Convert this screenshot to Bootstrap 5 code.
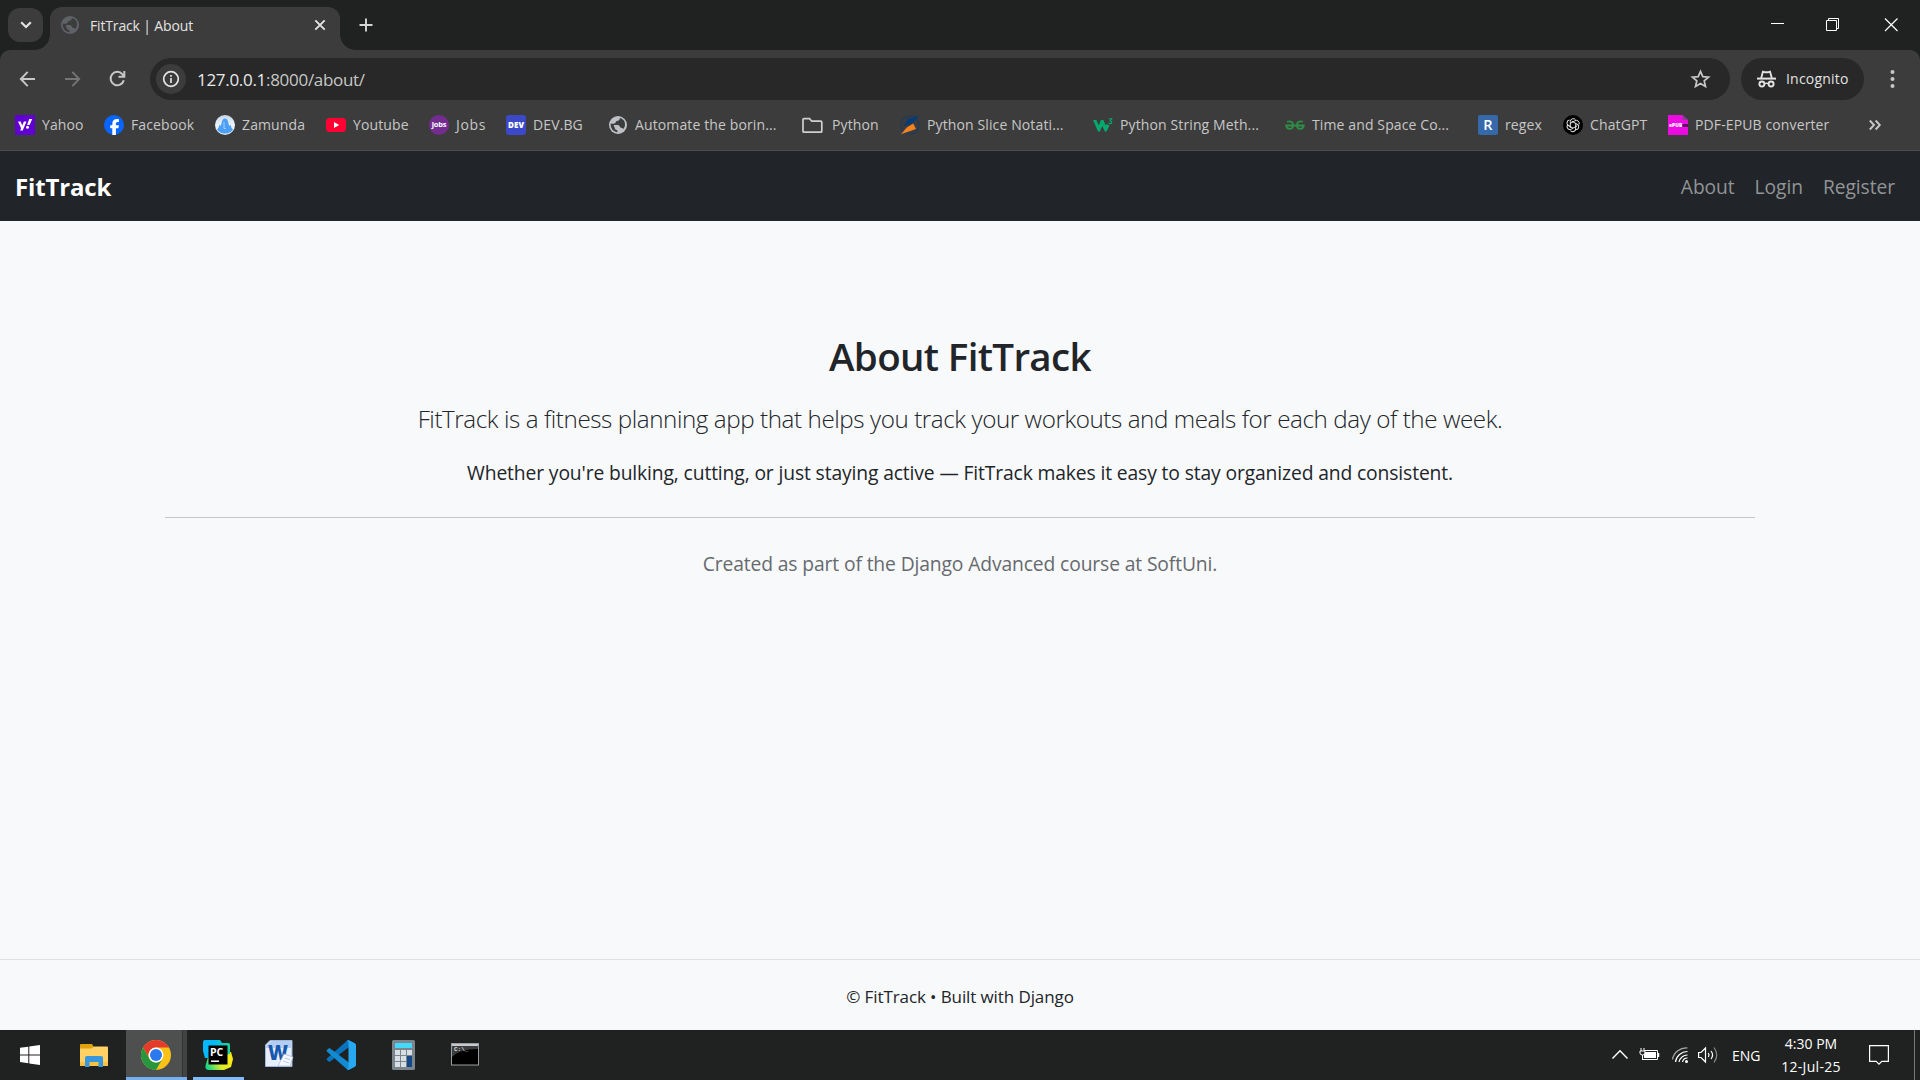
<!DOCTYPE html>
<html lang="en">
<head>
<meta charset="utf-8">
<title>FitTrack | About</title>
<link href="https://cdn.jsdelivr.net/npm/bootstrap@5.3.0/dist/css/bootstrap.min.css" rel="stylesheet">
<style>
body{font-family:"Open Sans","Noto Sans",sans-serif;width:1920px;height:1080px;overflow:hidden;background:#f8f9fa;color:#212529}
svg{display:block;flex:none;overflow:visible}
.browser-frame{height:151px;background:#202221;color:#c7c7c7;font-size:14px;line-height:20px;white-space:nowrap}
.tabstrip{height:50px;padding-left:8px}
.tab-search{width:35px;height:34px;border-radius:12px;background:#3c3c3c;margin-top:8px}
.page-tab{width:290px;height:43px;margin:7px 0 0 7px;padding:0 13px 7px 10px;background:#3c3c3c;border-radius:12px 12px 0 0;color:#e3e3e3}
.page-tab::before,.page-tab::after{content:"";position:absolute;bottom:0;width:15px;height:15px}
.page-tab::before{left:-15px;background:radial-gradient(circle at 0 0,transparent 14.5px,#3c3c3c 15px)}
.page-tab::after{right:-15px;background:radial-gradient(circle at 100% 0,transparent 14.5px,#3c3c3c 15px)}
.tab-title{margin-left:10px;padding-top:2px;letter-spacing:-.15px}
.new-tab{margin:15px 0 0 16px}
.win-btn{width:57px;height:50px}
.toolbar-area{height:101px;background:#3c3c3c;border-bottom:1px solid #4b4b4b;border-radius:10px 10px 0 0}
.toolbar-row{height:58px;padding-left:13px}
.tool-btn{width:45px}
.omnibox{width:1580px;height:42px;border-radius:21px;background:#282828;padding:0 19px 0 6px;margin-left:2px;font-size:17px;letter-spacing:-.3px}
.site-info{width:30px;height:30px;border-radius:50%;background:#3c3c3c}
.url-text{margin-left:11px;padding-top:1px}
.url-host{color:#e8e8e8}
.incog{width:123px;height:42px;border-radius:21px;background:#282828;margin-left:11px;padding-left:16px;color:#e3e3e3;gap:10px;letter-spacing:.2px}
.kebab{margin-left:26px}
.bm-row{height:34px;padding-left:15px;letter-spacing:.12px}
.bm{gap:7px}
.bm-89{width:89px}.bm-111{width:111px}.bm-103{width:103px}.bm-77{width:77px}.bm-102{width:102px}
.bm-197{width:197px}.bm-95{width:95px}.bm-193{width:193px}.bm-192{width:192px}.bm-85{width:85px}.bm-105{width:105px}.bm-201{width:201px}
.bm-77{letter-spacing:.7px}
.site-nav{height:70px;background:#212529;padding:0 25px 0 15px;font-size:19.200px;color:#919496}
.brand-name{font-size:24px;letter-spacing:-.15px;padding-top:1px}
.nav-items{gap:20px;padding-top:2px;letter-spacing:-.05px}
.about-pane{height:738px;padding:111px 165px 0}
.about-title{font-size:38.500px;font-weight:600;line-height:48px;letter-spacing:-.65px;margin-bottom:20px}
.about-lead{font-size:24.200px;font-weight:300;line-height:38px;letter-spacing:-.42px;margin-bottom:20px}
.about-text{font-size:19.300px;line-height:30px;margin:0;letter-spacing:-.13px}
.about-rule{height:1px;background:#c3c5c6;margin:29px 0 31px}
.about-note{color:#666a6e}
.site-foot{height:71px;border-top:1px solid #dfe2e5;padding-top:24px;font-size:17px;line-height:26px;letter-spacing:-.1px}
.taskbar{height:50px;background:#202221;color:#fff;font-size:14px}
.tile{width:62px;height:50px}
.tile-start{width:61px;padding-right:2px}
.tile-files{width:65px}
.tile-chrome{width:61px;background:linear-gradient(90deg,#4e504f 56px,#323433 56px,#323433 57px,#414342 57px);border-bottom:3px solid #76b0f0}
.tile-chrome svg{margin:3px 0 0 15px}
.tile-pycharm{width:51px;margin:0 4px 0 6px;border-bottom:3px solid #82bbfa}
.tile-pycharm svg{margin:3px 1px 0 0}
.tray{padding-right:5px}
.tray-wifi{margin-left:10px}
.tray-sound{margin-left:7px}
.tray-lang{width:30px;margin-left:13px}
.tray-clock{width:64px;margin-left:17px;line-height:23px}
.tray-date{letter-spacing:.3px}
.tray-note{margin-left:26px}
.peek{width:1px;height:50px;background:#777;margin-left:25px}
</style>
</head>
<body class="d-flex flex-column">

<header class="browser-frame flex-shrink-0">
  <div class="tabstrip d-flex">
    <div class="tab-search d-flex align-items-center justify-content-center"><svg width="12" height="8" viewBox="0 0 12 8" fill="none" stroke="#e3e3e3" stroke-width="2.200"><path d="M1.200 1.300 6 6l4.800-4.700"/></svg></div>
    <div class="page-tab position-relative d-flex align-items-center">
      <svg width="20" height="20" viewBox="0 0 20 20"><circle cx="10" cy="10" r="9" fill="#5f6368"/><path d="M11.800 2.900c.2 2-1 2.700-2.500 2.900-1.700.2-1.200 2.400-2.900 2.600-1.300.1-1.500.9-3.600-.1C1.800 13 5.500 17 9.500 17.200c.2-1.800-.6-2.200-1.800-2.700-1.400-.7-.5-2.300-1.700-3.100l-.2-1.300h4.400c1.700.2 1.200 2.400 2.900 2.600 1.200.1 1.700.5 2.300 1.300 3.600-4.600 1-10.400-3.600-11.100z" fill="#3c3c3c"/></svg>
      <span class="tab-title">FitTrack | About</span>
      <svg class="ms-auto" width="14" height="14" viewBox="0 0 14 14" stroke="#e3e3e3" stroke-width="1.900"><path d="M2.300 2.300l9.400 9.400M11.700 2.300l-9.400 9.400"/></svg>
    </div>
    <svg class="new-tab" width="20" height="20" viewBox="0 0 20 20" stroke="#d6d6d6" stroke-width="1.900"><path d="M10 3.500v13M3.500 10h13"/></svg>
    <div class="d-flex ms-auto">
      <div class="win-btn d-flex align-items-center justify-content-center"><svg width="14" height="14"><path d="M0 5.500h13" stroke="#fff"/></svg></div>
      <div class="win-btn d-flex align-items-center justify-content-center pe-1"><svg width="14" height="14" fill="none" stroke="#fff"><path d="M.5 2.500h10v10H.500zM2.500 2.500v-2h10v10h-2"/></svg></div>
      <div class="win-btn d-flex align-items-center justify-content-center"><svg width="14" height="14" stroke="#fff" stroke-width="1.200"><path d="M0 .5l12.500 12.500M12.500 .5L0 13"/></svg></div>
    </div>
  </div>

  <div class="toolbar-area">
    <div class="toolbar-row d-flex align-items-center">
      <div class="tool-btn"><svg width="28" height="28" viewBox="0 0 28 28" fill="none" stroke="#c7c7c7" stroke-width="1.900"><path d="M22 14H8M14.700 6.900 7.800 14l6.900 7.100"/></svg></div>
      <div class="tool-btn"><svg width="28" height="28" viewBox="0 0 28 28" fill="none" stroke="#757575" stroke-width="1.900"><path d="M7 14h14M14.300 6.900l6.900 7.100-6.900 7.100"/></svg></div>
      <div class="tool-btn"><svg width="28" height="28" viewBox="0 0 28 28" fill="none" stroke="#c7c7c7" stroke-width="2"><path d="M20.800 15.200A6.700 6.700 0 1 1 19.500 9.300L21 11M21.300 6v5.700h-5.800"/></svg></div>
      <div class="omnibox d-flex align-items-center">
        <div class="site-info d-flex align-items-center justify-content-center"><svg width="18" height="18" viewBox="0 0 18 18" fill="none" stroke="#e3e3e3" stroke-width="1.700"><circle cx="9" cy="9" r="7.300"/><path d="M9 8v5M9 5v1.800"/></svg></div>
        <span class="url-text"><span class="url-host">127.0.0.1</span>:8000/about/</span>
        <svg class="ms-auto" width="20" height="20" viewBox="0 0 20 20" fill="none" stroke="#c7c7c7" stroke-width="1.700"><path d="M9.500 2.300l2.300 5.300 5.800.5-4.400 3.800 1.300 5.700-5-3-5 3 1.300-5.700L1.400 8.100l5.800-.5z"/></svg>
      </div>
      <div class="incog d-flex align-items-center">
        <svg width="19" height="18" viewBox="0 0 19 18" fill="none" stroke="#e3e3e3" stroke-width="1.900"><path d="M0 8.600h19" stroke-width="2"/><path d="M4.200 8 6 1.600l2.300.7h2.400l2.300-.7L14.800 8"/><circle cx="4.900" cy="14" r="2.500"/><circle cx="14.100" cy="14" r="2.500"/><path d="M7.400 13.700q2.100-1.100 4.200 0" stroke-width="1.500"/></svg>
        <span>Incognito</span>
      </div>
      <svg class="kebab" width="5" height="20" fill="#c7c7c7"><circle cx="2.500" cy="3" r="2"/><circle cx="2.500" cy="10" r="2"/><circle cx="2.500" cy="17" r="2"/></svg>
    </div>

    <div class="bm-row d-flex align-items-center">
      <div class="bm bm-89 d-flex align-items-center"><svg width="20" height="20"><rect width="20" height="20" fill="#6001d2"/><path d="M3 6.500h2.600l1.700 4 1.600-4h2.600L7.700 15.500H5.200l.9-2.200zM14.200 4h3L14.600 10h-2.500z" fill="#fff"/><circle cx="12.500" cy="12.200" r="1.500" fill="#fff"/></svg><span>Yahoo</span></div>
      <div class="bm bm-111 d-flex align-items-center"><svg width="20" height="20"><circle cx="10" cy="10" r="10" fill="#0866ff"/><path d="M8.300 20v-6.700H6.200v-3h2.100V9c0-3.400 1.500-5 4.900-5 .6 0 1.400.1 1.800.2v2.800c-.4 0-.7-.1-1.100-.1-1.600 0-2 .8-2 2.100v1.300h3l-.5 3h-2.500v6.600z" fill="#fff"/></svg><span>Facebook</span></div>
      <div class="bm bm-111 d-flex align-items-center"><svg width="20" height="20"><defs><linearGradient id="zg" x2="0" y2="1"><stop stop-color="#c3d5e6"/><stop offset=".5" stop-color="#eef5fb"/><stop offset="1" stop-color="#d3e5f4"/></linearGradient></defs><circle cx="10" cy="10" r="10" fill="url(#zg)"/><path d="M2 14.500c1.500-1 2-3 2.500-5l1.300 1.500L7 6.500C7.500 4.500 8.500 3.500 10 3.500s2.500 1 3 3l1.200 4.500 1.300-1.500c.5 2 1 4 2.500 5-3.500 5.200-12.500 5.200-16 0z" fill="#4b9ff6"/><path d="M9 7v6.500h2" stroke="#a5cffa" fill="none"/></svg><span>Zamunda</span></div>
      <div class="bm bm-103 d-flex align-items-center"><svg width="20" height="20"><rect y="3" width="20" height="14" rx="3.500" fill="#ff0033"/><path d="M8 7v6l5.200-3z" fill="#fff"/></svg><span>Youtube</span></div>
      <div class="bm bm-77 d-flex align-items-center"><svg width="20" height="20"><circle cx="10" cy="10" r="10" fill="#752c91"/><text x="10" y="12" font-family="Open Sans" font-size="7.500" font-weight="700" fill="#fff" text-anchor="middle" letter-spacing="-.2">jobs</text></svg><span>Jobs</span></div>
      <div class="bm bm-102 d-flex align-items-center"><svg width="20" height="20"><rect width="20" height="20" rx="3" fill="#3b49c9"/><text x="10" y="13" font-family="Open Sans" font-size="8" font-weight="800" fill="#fff" text-anchor="middle">DEV</text></svg><span>DEV.BG</span></div>
      <div class="bm bm-197 d-flex align-items-center"><svg width="20" height="20"><circle cx="10" cy="10" r="9" fill="#bdc1c6"/><path d="M11.800 2.900c.2 2-1 2.700-2.500 2.900-1.700.2-1.200 2.400-2.900 2.600-1.300.1-1.500.9-3.600-.1C1.800 13 5.500 17 9.500 17.200c.2-1.800-.6-2.200-1.800-2.700-1.400-.7-.5-2.300-1.700-3.100l-.2-1.300h4.400c1.700.2 1.200 2.400 2.900 2.600 1.200.1 1.700.5 2.300 1.300 3.600-4.600 1-10.400-3.600-11.100z" fill="#3c3c3c"/></svg><span>Automate the borin...</span></div>
      <div class="bm bm-95 d-flex align-items-center"><svg width="20" height="20" fill="none" stroke="#d0d0d0" stroke-width="1.700"><path d="M-2 4.600q0-1 1-1h5.500l2.300 2.600h9q1 0 1 1v9q0 1-1 1H-1q-1 0-1-1z"/></svg><span>Python</span></div>
      <div class="bm bm-193 d-flex align-items-center"><svg width="20" height="20"><circle cx="10" cy="10" r="9" fill="none" stroke="#243b58" stroke-width="1.600"/><path d="M18.800.8 7.500 4.200 3.800 11l8.800-2.500z" fill="#063a78"/><path d="M1 19.200l5.800-6.600 6.400-4.200L16 14z" fill="#f5821f"/></svg><span>Python Slice Notati...</span></div>
      <div class="bm bm-192 d-flex align-items-center"><svg width="20" height="20"><path d="M0 5h3.400l2.400 5.500L8 5h2.400l2.300 5.500L13.500 9l3 1.600-3 5.900h-1.700L9.300 11l-2.500 5.500H5z" fill="#04aa6d"/><path d="M15.800 3.800h3l-1.600 2.100c2.400 0 1.900 3-.3 2.700q-.9-.1-1.200-.8" fill="none" stroke="#04aa6d" stroke-width="1.100"/></svg><span>Python String Meth...</span></div>
      <div class="bm bm-193 d-flex align-items-center"><svg width="20" height="20" fill="none" stroke="#2f8d46" stroke-width="1.800"><path d="M2.200 6.900c2-1 5.800-.8 5.800 3.300 0 2-1.300 3.600-3.300 3.600-1.900 0-3.200-1.200-3.500-3.300h17.600c-.3 2.100-1.600 3.300-3.500 3.300-2 0-3.300-1.600-3.300-3.600 0-4.100 3.800-4.300 5.800-3.300"/></svg><span>Time and Space Co...</span></div>
      <div class="bm bm-85 d-flex align-items-center"><svg width="20" height="20"><rect width="20" height="20" rx="2" fill="#3569a9"/><text x="10" y="15.200" font-family="Open Sans" font-size="14.500" font-weight="600" fill="#fff" text-anchor="middle">R</text></svg><span>regex</span></div>
      <div class="bm bm-105 d-flex align-items-center"><svg width="20" height="20"><circle cx="10" cy="10" r="10" fill="#000"/><g fill="none" stroke="#e8e8e8" stroke-width="1"><path id="petal" d="M7.300 13V6.500a2.900 2.900 0 0 1 5.400-1.400M7.300 8.400l4.600-2.600a2.900 2.900 0 0 1 4.100 3.700"/><use href="#petal" transform="rotate(120 10 10)"/><use href="#petal" transform="rotate(240 10 10)"/></g></svg><span>ChatGPT</span></div>
      <div class="bm bm-201 d-flex align-items-center"><svg width="20" height="20"><path d="M0 0h14.500L20 5v15H0z" fill="#ec0be0"/><path d="M14.500 0 20 5h-5.500z" fill="#86408a"/><text x="1" y="12.300" font-family="Open Sans" font-size="4.800" font-weight="800" fill="#fff">ePUB</text><rect x="14.500" y="9.200" width="5.500" height="2.600" fill="#53104f"/></svg><span>PDF-EPUB converter</span></div>
      <svg width="12" height="12" viewBox="0 0 12 12" fill="none" stroke="#c7c7c7" stroke-width="1.900"><path d="M.8 1.500 5 6 .8 10.500M6.600 1.500 10.800 6l-4.200 4.500"/></svg>
    </div>
  </div>
</header>

<nav class="site-nav d-flex align-items-center justify-content-between flex-shrink-0">
  <span class="brand-name fw-bold text-white">FitTrack</span>
  <div class="nav-items d-flex"><span>About</span><span>Login</span><span>Register</span></div>
</nav>

<main class="about-pane text-center flex-shrink-0">
  <h1 class="about-title">About FitTrack</h1>
  <p class="about-lead">FitTrack is a fitness planning app that helps you track your workouts and meals for each day of the week.</p>
  <p class="about-text">Whether you're bulking, cutting, or just staying active — FitTrack makes it easy to stay organized and consistent.</p>
  <div class="about-rule"></div>
  <p class="about-text about-note">Created as part of the Django Advanced course at SoftUni.</p>
</main>

<footer class="site-foot text-center flex-shrink-0">© FitTrack • Built with Django</footer>

<div class="taskbar d-flex flex-shrink-0">
  <div class="tile tile-start d-flex align-items-center justify-content-center"><svg width="20" height="20" fill="#fff"><path d="M0 2.800 8.300 1.700v7.700H0zM9.300 1.500 20 0v9.400H9.300zM0 10.400h8.300v7.800L0 17.100zM9.300 10.400H20V20L9.300 18.400z"/></svg></div>
  <div class="tile tile-files d-flex align-items-center justify-content-center"><svg width="28" height="23"><path d="M0 1q0-1 1-1h11l1.800 3H28v5H0z" fill="#e2a20d"/><path d="M0 4.500h11.500L14 2.500h13q1 0 1 1V22H0z" fill="#ffd064"/><path d="M0 18h28v4H0z" fill="#f9c043"/><path d="M5 23v-9q0-2 2-2h14q2 0 2 2v9h-4.500v-5h-9v5z" fill="#3796dc"/></svg></div>
  <div class="tile tile-chrome"><svg width="30" height="44" viewBox="0 -7 30 44"><circle cx="15" cy="15" r="15" fill="#fbc116"/><path d="M15 0a15 15 0 0 1 13 7.500H15a7.500 7.500 0 0 0-6.500 11.250L2 7.500A15 15 0 0 1 15 0z" fill="#e33b2e"/><path d="M2 7.500l6.500 11.250A7.500 7.500 0 0 0 21.500 18.750L15 30A15 15 0 0 1 2 7.500z" fill="#28963f"/><circle cx="15" cy="15" r="7.500" fill="#fff"/><circle cx="15" cy="15" r="6" fill="#2a79ef"/></svg></div>
  <div class="tile tile-pycharm d-flex align-items-center justify-content-center"><svg width="30" height="30"><defs><linearGradient id="pg" x1="0" y1="1" x2="1" y2=".6"><stop offset=".1" stop-color="#12d68c"/><stop offset=".55" stop-color="#d8ec2c"/><stop offset="1" stop-color="#fbe914"/></linearGradient><linearGradient id="pb" x1="0" y1="0" x2="1" y2="0"><stop offset=".4" stop-color="#07b8fa"/><stop offset="1" stop-color="#1fd491"/></linearGradient></defs><path d="M6 14l22-2 2 7-2 8-7 3H5q-4-1-2-6z" fill="url(#pg)"/><path d="M2 0h15l2 3h6.500q1.500 0 1.500 2v9L6 18H2L0 11V2q0-2 2-2z" fill="url(#pb)"/><rect x="5.500" y="5.500" width="19" height="19" fill="#000"/><text x="7" y="15.500" font-family="Open Sans" font-size="10.500" font-weight="700" fill="#fff">PC</text><path d="M8 21.200h8" stroke="#fff" stroke-width="1.500"/></svg></div>
  <div class="tile d-flex align-items-center justify-content-center"><svg width="28" height="30"><path d="M5 .5h22v26H.500V5z" fill="#e6effb" stroke="#9db7dd"/><path d="M6 1h20.500v7H1V6z" fill="#b5cdf0"/><text x="3" y="20" font-family="Open Sans" font-size="21" font-weight="800" fill="#1858ae" textLength="20" lengthAdjust="spacingAndGlyphs">W</text><path d="M19 14l9 3-3 9H13z" fill="#f4f7fd" stroke="#a6b8d6" stroke-width=".7"/><path d="M20 18l5 1.700M18 21l6 2" stroke="#b9cae6"/></svg></div>
  <div class="tile d-flex align-items-center justify-content-center"><svg width="30" height="30" viewBox="0 0 100 100"><path d="M96 11 76 1Q71 0 68 4L3 62Q1 65 3 67l6 5q2 2 5 0L92 12z" fill="#0873bd"/><path d="M96 89 76 99q-5 1-8-3L3 38Q1 35 3 33l6-5q2-2 5 0l78 59z" fill="#128bd2"/><path d="M76 99q-5 1-7-4c3 2 6 0 6-4V9c0-4-3-6-6-4q2-5 7-4l20 10q4 2 4 6v66q0 4-4 6z" fill="#29a8f2"/></svg></div>
  <div class="tile d-flex align-items-center justify-content-center"><svg width="23" height="30"><rect width="23" height="30" rx="1.500" fill="#7b858d"/><rect x="3" y="3" width="17" height="5" fill="#43d9fb"/><g fill="#d7dee4"><path d="M3 10h5v5H3zM9 10h5v5H9zM15 10h5v5h-5zM3 16h5v5H3zM9 16h5v5H9zM3 22h5v5H3zM9 22h5v5H9z"/></g><path d="M15 16h5v11h-5z" fill="#144887"/></svg></div>
  <div class="tile d-flex align-items-center justify-content-center"><svg width="28" height="30"><rect x=".5" y="3.500" width="27" height="21.500" fill="#000" stroke="#999da1"/><path d="M1 4h26v2H1z" fill="#c7cacc"/><path d="M1 6h26v3Q8 9 1 17z" fill="#3c3d3e"/><text x="3" y="11" font-family="Liberation Mono" font-size="6" font-weight="700" fill="#ddd">C:\_</text></svg></div>

  <div class="tray d-flex align-items-center ms-auto">
    <svg width="16" height="16" fill="none" stroke="#fff" stroke-width="1.400"><path d="M.5 11.500 8 3.700l7.500 7.800"/></svg>
    <svg class="ms-2" width="24" height="16" fill="none" stroke="#fff"><path d="M8.500 3.500h13v9h-15V9"/><path d="M9 5h11v6H8V8z" fill="#fff" stroke="none"/><path d="M22.500 6v4" stroke-width="1.500"/><path d="M5 1v3M8 1v3M4 4h5v2q0 2-2.500 2T4 6zM6.500 8v5"/></svg>
    <svg class="tray-wifi" width="20" height="18" fill="none" stroke="#fff" stroke-width="1.200"><path d="M2.500 13.500A14 14 0 0 1 17.500 2" stroke="#aaa"/><path d="M5.500 16A12 12 0 0 1 17.500 5.500M9 16a8.500 8.500 0 0 1 8.500-7M12.500 16a5 5 0 0 1 5-4"/><circle cx="16.500" cy="15.500" r="1.500" fill="#fff" stroke="none"/></svg>
    <svg class="tray-sound" width="22" height="18" fill="none" stroke="#fff" stroke-width="1.200"><path d="M1.600 6.500H4L8.500 2v14L4 11.500H1.600z"/><path d="M11.300 7q1.500 2 0 4M14 5q3.200 4 0 8"/><path d="M17 1.500q5.500 7.500 0 15" stroke="#888"/></svg>
    <span class="tray-lang">ENG</span>
    <div class="tray-clock text-center"><div>4:30 PM</div><div class="tray-date">12-Jul-25</div></div>
    <svg class="tray-note" width="20" height="20" fill="none" stroke="#fff" stroke-width="1.200"><path d="M.6.600h18.800v15.800h-6.600L10 19.200l-2.800-2.800H.6z"/></svg>
    <div class="peek"></div>
  </div>
</div>

<script src="https://cdn.jsdelivr.net/npm/bootstrap@5.3.0/dist/js/bootstrap.bundle.min.js"></script>
</body>
</html>
